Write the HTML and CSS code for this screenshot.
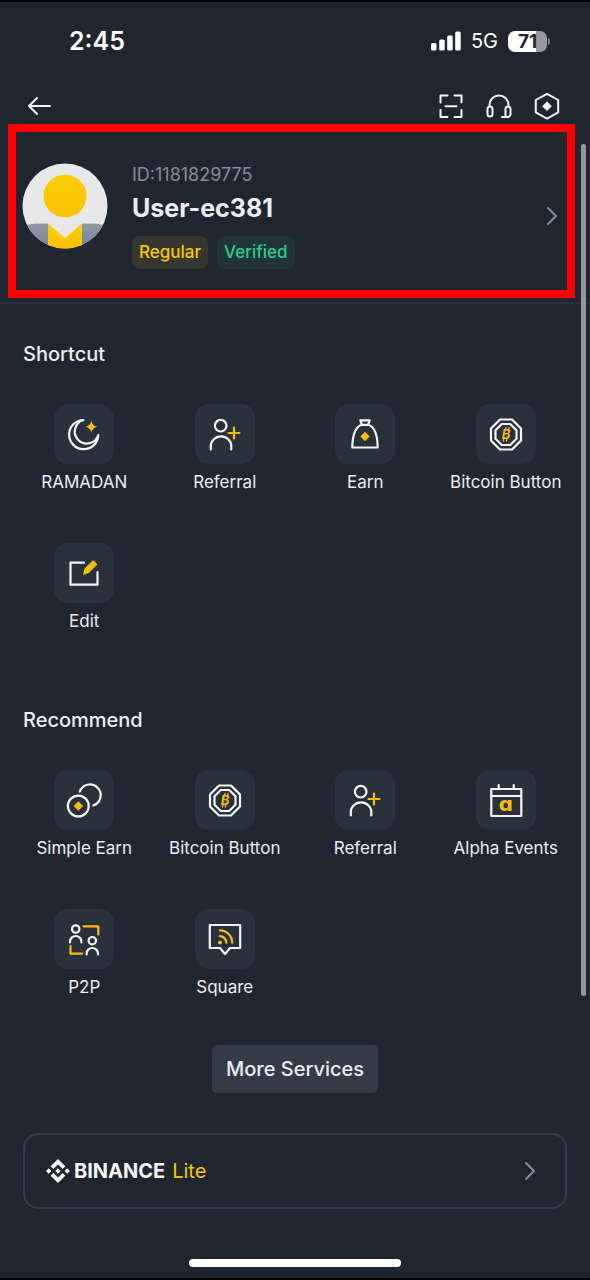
FILE: index.html
```html
<!DOCTYPE html>
<html lang="en">
<head>
<meta charset="utf-8">
<meta name="viewport" content="width=device-width, initial-scale=1">
<title>Account</title>
<link rel="stylesheet" href="styles.css">
</head>
<body>
<svg class="sprite" aria-hidden="true">
  <symbol id="i-referral" viewBox="0 0 60 60">
    <circle cx="25.7" cy="21.7" r="5.8"/>
    <path d="M15.8 45.5V42a10.2 9.6 0 0 1 20.5 0v3.5"/>
    <path class="gold-line" d="M33.500 29h11M39 23.500v11"/>
  </symbol>
  <symbol id="i-chevron" viewBox="0 0 12 20">
    <path d="M2 2l8 8-8 8"/>
  </symbol>
</svg>

<div class="statusbar">
  <span class="time">2:45</span>
  <div class="indicators">
    <svg class="signal" viewBox="0 0 30 20" aria-hidden="true"><rect x="0" y="12" width="5.500" height="7.500" rx="1.500"/><rect x="8.200" y="8.500" width="5.500" height="11" rx="1.500"/><rect x="16.200" y="4.500" width="5.500" height="15" rx="1.500"/><rect x="24.200" y="0.500" width="5.500" height="19" rx="1.500"/></svg>
    <span class="network">5G</span>
    <span class="battery">71</span>
  </div>
</div>

<header class="topbar">
  <button class="icon-btn" aria-label="Back"><svg viewBox="0 0 24 24"><path d="M23 12H2M10 4l-8 8 8 8"/></svg></button>
  <div class="actions">
    <button class="icon-btn" aria-label="Scan"><svg viewBox="0 0 28 28"><path d="M10.500 3.500H3.500v7M17.500 3.500h7v7M10.500 25H3.500v-7M17.500 25h7v-7M8.500 14.300h11"/></svg></button>
    <button class="icon-btn" aria-label="Support"><svg viewBox="0 0 28 28"><path d="M4.500 14.500V13a9.500 9.500 0 0 1 19 0v1.500M23.500 25H17"/><rect x="2.500" y="14.500" width="5" height="10" rx="2.500"/><path d="M20.500 25V17a2.500 2.500 0 0 1 5 0v5a3 3 0 0 1-3 3z"/></svg></button>
    <button class="icon-btn" aria-label="Settings"><svg viewBox="0 0 28 28"><path d="M14 1.800l11.200 6.200v12.400L14 26.600 2.800 20.400V8z"/><path class="fill" d="M14 9.400l4.800 4.800-4.800 4.800-4.800-4.800z"/></svg></button>
  </div>
</header>

<a class="profile" href="#profile">
  <svg class="avatar" viewBox="0 0 86 86" aria-hidden="true">
    <defs>
      <clipPath id="round"><circle cx="43" cy="43" r="42.500"/></clipPath>
      <linearGradient id="gold" x1="0" y1="0" x2="0" y2="1"><stop offset="0" stop-color="#f8d00c"/><stop offset="1" stop-color="#fdbf02"/></linearGradient>
      <linearGradient id="grey" x1="0" y1="0" x2="0" y2="1"><stop offset="0" stop-color="#929aa6"/><stop offset="1" stop-color="#757f90"/></linearGradient>
    </defs>
    <g clip-path="url(#round)">
      <rect width="86" height="86" fill="#e6e8ea"/>
      <path d="M5 62q4-1.500 8-1.500h13V86H0V66zM81 62q-4-1.500-8-1.500H60V86h26V66z" fill="url(#grey)"/>
      <path d="M26 60.500L43 75l17-14.500V86H26z" fill="url(#gold)"/>
      <circle cx="43" cy="33" r="21.500" fill="url(#gold)"/>
    </g>
  </svg>
  <div class="identity">
    <span class="uid">ID:1181829775</span>
    <span class="username">User-ec381</span>
    <span class="tags"><span class="tag tag-regular">Regular</span><span class="tag tag-verified">Verified</span></span>
  </div>
  <svg class="chevron" aria-hidden="true"><use href="#i-chevron"/></svg>
</a>

<main class="content">
  <section class="group">
    <h2 class="title">Shortcut</h2>
    <div class="services">
      <button class="service"><svg class="tile" viewBox="0 0 60 60"><path d="M29.500 16A14.600 14.600 0 1 0 44.300 31 12 12 0 1 1 29.500 16z"/><path class="gold" d="M37.300 16.800q1 4.900 5.900 5.900-4.900 1-5.900 5.900-1-4.900-5.900-5.900 4.900-1 5.900-5.900z"/></svg><span>RAMADAN</span></button>
      <button class="service"><svg class="tile"><use href="#i-referral"/></svg><span>Referral</span></button>
      <button class="service"><svg class="tile" viewBox="0 0 60 60"><path d="M25.300 16.300h9.400L33 20.800h-6zM27 20.800c-5.500 1.500-9.500 7-9.700 22.700h25.400c-.2-15.700-4.200-21.200-9.700-22.700"/><path class="gold" d="M30 27.800l4.700 4.700-4.700 4.700-4.700-4.700z"/></svg><span>Earn</span></button>
      <button class="service"><svg class="tile" viewBox="0 0 60 60"><path d="M24 15.500h12l9 9v12l-9 9H24l-9-9v-12z"/><path d="M25.800 20h8.400l6.300 6.300v8.400L34.200 41h-8.400l-6.300-6.300v-8.400z"/><text class="coin-letter" x="30" y="35" text-anchor="middle">B</text><path class="gold-thin" d="M29.600 25.500l.4-2M32.600 25.500l.4-2M27.400 37l.4-2M30.400 37l.4-2"/></svg><span>Bitcoin Button</span></button>
      <button class="service"><svg class="tile" viewBox="0 0 60 60"><path d="M30 19.700H16.500v22h27V29"/><path class="gold" d="M29 32l1.500-6.500 8-7.800a1 1 0 0 1 1.400 0l3 3a1 1 0 0 1 0 1.400l-8 7.900z"/></svg><span>Edit</span></button>
    </div>
  </section>

  <section class="group">
    <h2 class="title">Recommend</h2>
    <div class="services">
      <button class="service"><svg class="tile" viewBox="0 0 60 60"><circle cx="24.300" cy="36" r="10.400"/><path d="M25.700 21.700A10.800 10.800 0 1 1 39.300 35.500"/><path class="gold" d="M24.300 31.300l4.700 4.700-4.700 4.700-4.700-4.700z"/></svg><span>Simple Earn</span></button>
      <button class="service"><svg class="tile" viewBox="0 0 60 60"><path d="M24 15.500h12l9 9v12l-9 9H24l-9-9v-12z"/><path d="M25.800 20h8.400l6.300 6.300v8.400L34.200 41h-8.400l-6.300-6.300v-8.400z"/><text class="coin-letter" x="30" y="35" text-anchor="middle">B</text><path class="gold-thin" d="M29.600 25.500l.4-2M32.600 25.500l.4-2M27.400 37l.4-2M30.400 37l.4-2"/></svg><span>Bitcoin Button</span></button>
      <button class="service"><svg class="tile"><use href="#i-referral"/></svg><span>Referral</span></button>
      <button class="service"><svg class="tile" viewBox="0 0 60 60"><path d="M15.300 19h30v27h-30zM15.300 26h30M22.700 15v4M37.700 15v4"/><text class="alpha-letter" x="30" y="41" text-anchor="middle">ɑ</text></svg><span>Alpha Events</span></button>
      <button class="service"><svg class="tile" viewBox="0 0 60 60"><circle cx="21.700" cy="20" r="3.700"/><path d="M16 33.500v-1a5.700 5.500 0 0 1 11.400 0v1"/><circle cx="38.300" cy="31.700" r="3.700"/><path d="M32.600 45.500v-1a5.700 5.500 0 0 1 11.400 0v1"/><path class="gold-line" d="M29.500 17.300h14.800v8.200M16.500 37v7.700h11.500"/></svg><span>P2P</span></button>
      <button class="service"><svg class="tile" viewBox="0 0 60 60"><path d="M14.800 16h30.400v23H35l-5 6-5-6H14.800z"/><path class="gold-line" d="M24.800 27.200a6.500 6.500 0 0 1 6.500 6.500M24.800 21.300a12.400 12.400 0 0 1 12.400 12.400"/><circle class="gold" cx="25" cy="33.500" r="1.900"/></svg><span>Square</span></button>
    </div>
  </section>

  <button class="more">More Services</button>

  <a class="lite" href="#lite">
    <svg class="logo" viewBox="0 0 24 24" aria-hidden="true"><path d="M16.624 13.920l2.718 2.716-7.353 7.353-7.353-7.352 2.717-2.717 4.636 4.660 4.635-4.660zm4.637-4.636L24 12l-2.715 2.716L18.568 12l2.693-2.716zm-9.272 0l2.716 2.692-2.717 2.717L9.272 12l2.717-2.716zm-9.273 0L5.409 12l-2.692 2.692L0 12l2.716-2.716zM11.989.012l7.353 7.329-2.718 2.715-4.635-4.635-4.636 4.659-2.717-2.715 7.353-7.353z"/></svg>
    <strong class="brand">BINANCE</strong>
    <span class="edition">Lite</span>
    <svg class="chevron" aria-hidden="true"><use href="#i-chevron"/></svg>
  </a>
</main>

<div class="home-indicator"></div>
<div class="scroll-thumb"></div>
</body>
</html>
```

FILE: styles.css
```css
* { box-sizing: border-box; }

body {
  position: relative;
  display: flex;
  flex-direction: column;
  min-height: 100vh;
  margin: 0;
  border: solid #000;
  border-width: 2px 0;
  background: #202630;
  color: #eaecef;
  font-family: Inter, "Noto Sans", sans-serif;
  font-size: 17px;
  line-height: 20px;
}

button {
  padding: 0;
  border: 0;
  background: none;
  color: inherit;
  font: inherit;
}

a { color: inherit; text-decoration: none; }

svg {
  fill: none;
  stroke: #f5f5f5;
  stroke-width: 2;
  stroke-linecap: round;
  stroke-linejoin: round;
}

.sprite { position: absolute; width: 0; height: 0; }

.statusbar {
  display: flex;
  justify-content: space-between;
  align-items: center;
  padding: 25px 43px 25px 69px;
  color: #fff;
  line-height: 28px;
}
.time { font-size: 25px; font-weight: 600; }
.indicators { display: flex; align-items: center; gap: 10px; }
.signal { width: 30px; height: 20px; fill: #fff; stroke: none; }
.network { font-size: 20px; }
.battery {
  position: relative;
  width: 39px;
  border-radius: 7px;
  background: linear-gradient(90deg, #fff 71%, #96999e 71%);
  color: #202630;
  font-size: 19px;
  font-weight: 700;
  line-height: 21px;
  text-align: center;
}
.battery::after {
  content: "";
  position: absolute;
  top: 7px;
  right: -3px;
  width: 2px;
  height: 7px;
  border-radius: 0 2px 2px 0;
  background: #7d8187;
}

.topbar {
  display: flex;
  justify-content: space-between;
  align-items: center;
  padding: 12px 29px 4px 27px;
}
.actions { display: flex; gap: 20px; }
.icon-btn { display: flex; }
.icon-btn svg { width: 28px; height: 28px; }
.topbar > .icon-btn svg { width: 24px; height: 24px; }
.fill { fill: #f5f5f5; stroke: none; }

.profile {
  display: flex;
  align-items: center;
  margin: 0 15px 0 8px;
  padding: 31px 9px 21px 6px;
  border: 8px solid #f00;
}
.avatar { width: 86px; height: 86px; align-self: flex-start; stroke: none; }
.identity {
  display: flex;
  flex: 1;
  flex-direction: column;
  margin-left: 24px;
}
.uid { color: #848e9c; font-size: 18px; line-height: 24px; }
.username {
  margin: 4px 0 11px;
  font-size: 25px;
  font-weight: 700;
  line-height: 34px;
}
.tags { display: flex; gap: 9px; }
.tag { padding: 0 7px; border-radius: 8px; line-height: 33px; font-weight: 500; }
.tag-regular { background: #37362f; color: #f8c800; }
.tag-verified { background: #213539; color: #2ecb8c; }
.chevron { width: 12px; height: 20px; stroke: #848e9c; }

.content {
  display: flex;
  flex-direction: column;
  margin-top: 4px;
  padding: 36px 14px 0;
  border-top: 2px solid #29303b;
}
.group { margin-bottom: 75px; }
.group + .group { margin-bottom: 48px; }
.title {
  margin: 0 9px 36px;
  font-size: 20px;
  font-weight: 500;
  line-height: 28px;
}
.services {
  display: grid;
  grid-template-columns: repeat(4, 1fr);
  row-gap: 51px;
}
.service {
  display: flex;
  flex-direction: column;
  align-items: center;
  gap: 8px;
  white-space: nowrap;
}
.tile {
  width: 60px;
  height: 60px;
  border-radius: 14px;
  background: #29313d;
  stroke-width: 2.2;
}
.gold { fill: #f8bc0c; stroke: none; }
.gold-line { stroke: #f8bc0c; }
.gold-thin { stroke: #f8bc0c; stroke-width: 1.3; }
.coin-letter,
.alpha-letter { fill: #f8bc0c; stroke: none; font-weight: 700; }
.coin-letter { font-size: 13px; font-style: italic; }
.alpha-letter { font-family: "DejaVu Sans", sans-serif; font-size: 20px; }

.more {
  align-self: center;
  padding: 0 14px;
  border-radius: 5px;
  background: #333b47;
  font-size: 20px;
  font-weight: 500;
  line-height: 48px;
}

.lite {
  display: flex;
  align-items: center;
  margin: 40px 9px 50px;
  padding: 0 29px 0 21px;
  border: 2px solid #333b47;
  border-radius: 15px;
  line-height: 72px;
}
.logo { width: 24px; height: 24px; fill: #f5f5f5; stroke: none; }
.brand { margin: 0 7px 0 4px; color: #f5f5f5; font-size: 20px; font-weight: 700; }
.edition { flex: 1; color: #f8c800; font-size: 20px; }

.home-indicator {
  align-self: center;
  width: 36%;
  height: 8px;
  margin: auto 0 11px;
  border-radius: 4px;
  background: #fff;
}

.scroll-thumb {
  position: absolute;
  top: 142px;
  right: 4px;
  width: 5px;
  height: 852px;
  border-radius: 3px;
  background: #94989e;
}
```
